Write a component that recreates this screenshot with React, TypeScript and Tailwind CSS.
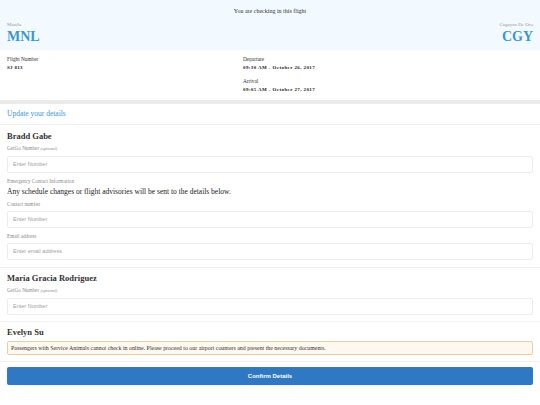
import React from "react";

const serif = "font-['Liberation_Serif',serif]";

function Input({ placeholder }: { placeholder: string }) {
  return (
    <div className="mt-[4px] h-[17px] rounded-[2px] border border-[#ececec] bg-white flex items-center px-[5px]">
      <span className="font-['Liberation_Sans',sans-serif] text-[5.5px] text-[#a0a0a0]">{placeholder}</span>
    </div>
  );
}

function Label({ children }: { children: React.ReactNode }) {
  return <div className="text-[5.2px] leading-[6px] text-[#8a8a8a]">{children}</div>;
}

function GetGo() {
  return (
    <Label>
      GetGo Number <span className="italic text-[4.2px]">(optional)</span>
    </Label>
  );
}

export default function App() {
  return (
    <div className={`w-[540px] h-[405px] bg-white overflow-hidden ${serif} text-[#222]`}>
      <div className="h-[50px] bg-[#f3faff] px-[7px] pt-[8px]">
        <div className="text-center text-[6px] leading-[7px] text-[#333]">You are checking in this flight</div>
        <div className="flex justify-between mt-[7px]">
          <div>
            <div className="text-[5px] leading-[6px] text-[#999]">Manila</div>
            <div className="mt-[1px] text-[14px] leading-[15px] font-bold text-[#3a96d2]">MNL</div>
          </div>
          <div className="text-right">
            <div className="text-[5px] leading-[6px] text-[#999]">Cagayan De Oro</div>
            <div className="mt-[1px] text-[14px] leading-[15px] font-bold text-[#3a96d2]">CGY</div>
          </div>
        </div>
      </div>
      <div className="flex px-[7px] pt-[6px] h-[50px]">
        <div className="w-[236px]">
          <div className="text-[5.3px] leading-[6px] text-[#333]">Flight Number</div>
          <div className="mt-[3px] text-[5px] leading-[6px] font-bold tracking-[0.3px]">SJ 813</div>
        </div>
        <div>
          <div className="text-[5.3px] leading-[6px] text-[#333]">Departure</div>
          <div className="mt-[3px] text-[5px] leading-[6px] font-bold tracking-[0.4px]">09:30 AM - October 26, 2017</div>
          <div className="mt-[7px] text-[5.3px] leading-[6px] text-[#333]">Arrival</div>
          <div className="mt-[3px] text-[5px] leading-[6px] font-bold tracking-[0.4px]">09:05 AM - October 27, 2017</div>
        </div>
      </div>
      <div className="h-[4px] bg-[#ebebeb]" />
      <div className="h-[21px] px-[7px] flex items-center border-b border-[#f0f0f0]">
        <span className="text-[7.5px] text-[#3a96d2]">Update your details</span>
      </div>
      <div className="px-[7px] pt-[6px] pb-[7px] border-b border-[#f0f0f0]">
        <div className="text-[8.5px] leading-[10px] font-bold text-[#333]">Bradd Gabe</div>
        <div className="mt-[4px]"><GetGo /></div>
        <Input placeholder="Enter Number" />
        <div className="mt-[5px]"><Label>Emergency Contact Information</Label></div>
        <div className="mt-[4px] text-[7.5px] leading-[8px] text-[#222]">Any schedule changes or flight advisories will be sent to the details below.</div>
        <div className="mt-[5px]"><Label>Contact number</Label></div>
        <Input placeholder="Enter Number" />
        <div className="mt-[5px]"><Label>Email address</Label></div>
        <Input placeholder="Enter email address" />
      </div>
      <div className="px-[7px] pt-[5px] pb-[6px] border-b border-[#f0f0f0]">
        <div className="text-[8.5px] leading-[10px] font-bold text-[#333]">Maria Gracia Rodriguez</div>
        <div className="mt-[4px]"><GetGo /></div>
        <Input placeholder="Enter Number" />
      </div>
      <div className="px-[7px] pt-[5px] pb-[6px] border-b border-[#f0f0f0]">
        <div className="text-[8.5px] leading-[10px] font-bold text-[#333]">Evelyn Su</div>
        <div className="mt-[4px] h-[14px] rounded-[2px] border border-[#e6cfa3] bg-[#fff8ef] flex items-center px-[3px]">
          <span className="text-[5.9px] text-[#333]">Passengers with Service Animals cannot check in online. Please proceed to our airport counters and present the necessary documents.</span>
        </div>
      </div>
      <div className="px-[7px] pt-[5px]">
        <div className="h-[18px] rounded-[2px] bg-[#2f78c4] flex items-center justify-center">
          <span className="font-['Liberation_Sans',sans-serif] text-[6px] font-bold text-white">Confirm Details</span>
        </div>
      </div>
    </div>
  );
}
